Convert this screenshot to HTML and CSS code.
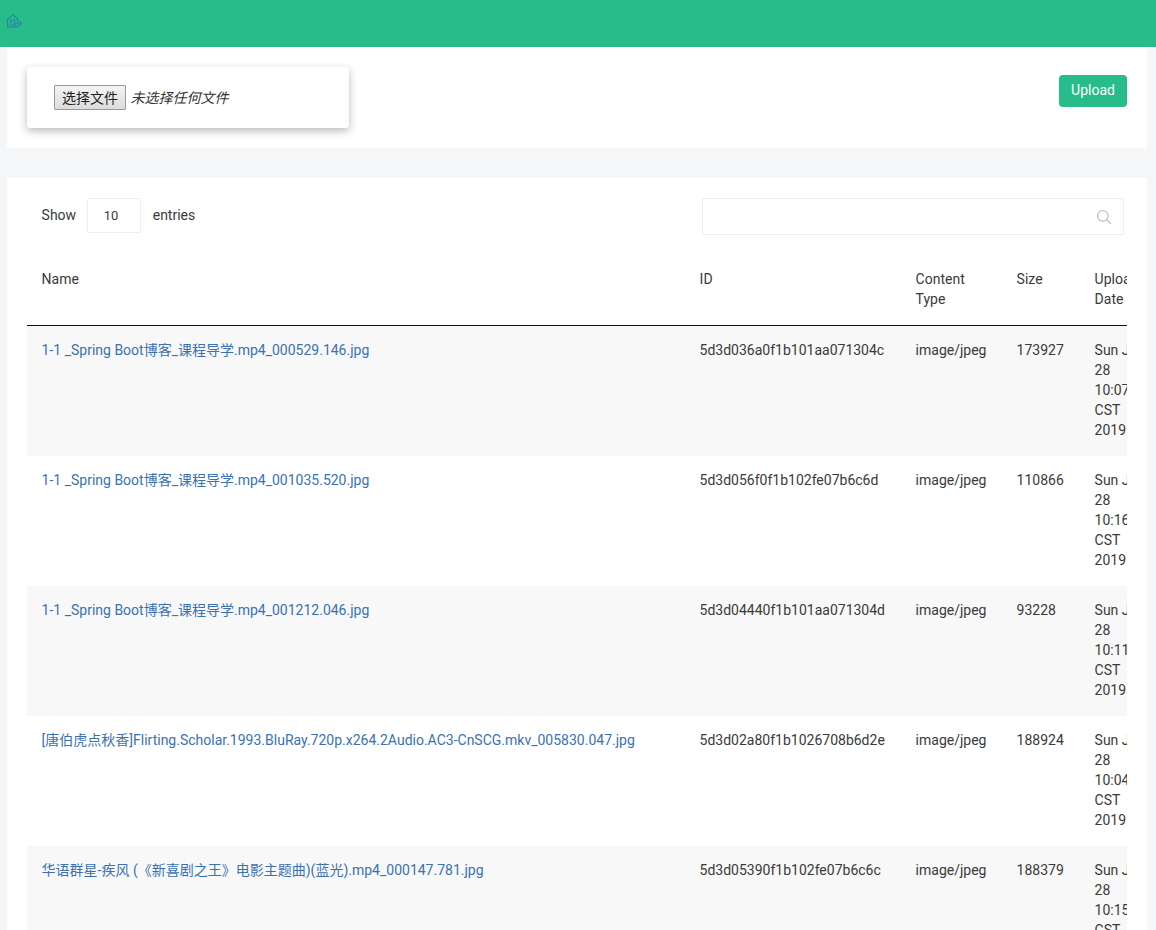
FILE: index.html
```html
<!DOCTYPE html>
<html lang="zh-CN">
<head>
<meta charset="utf-8">
<title>Files</title>
<link rel="stylesheet" href="styles.css">
</head>
<body>
<header class="topbar">
  <svg class="logo" width="16" height="14" viewBox="0 0 16 14" fill="none" stroke="#2a86a6" stroke-width="1.2">
    <path d="M0.5 6.5 L7 0.6 L11.5 4.8 V7.5 M1.5 6 V12.8 H11.5 L15.4 9.4 L14 8 L11 9.8 H7.5"/>
    <path d="M4.8 9.5 V6 H8.6 V8.5 M3.5 11 H10"/>
  </svg>
</header>
<main class="content">
  <section class="card upload-card">
    <div class="file-box">
      <button class="file-btn" type="button">选择文件</button>
      <span class="file-name">未选择任何文件</span>
    </div>
    <button class="upload-btn" type="button">Upload</button>
  </section>
  <section class="card table-card">
    <div class="table-tools">
      <div class="length">
        <span>Show</span>
        <span class="select">10</span>
        <span>entries</span>
      </div>
      <div class="search">
        <svg width="16" height="16" viewBox="0 0 16 16" fill="none" stroke="#b4b8c6" stroke-width="1.1">
          <circle cx="6.8" cy="6.8" r="5.3"/>
          <path d="M10.7 10.7 L15 15" stroke="#c9b9a8"/>
        </svg>
      </div>
    </div>
    <div class="table-wrap">
      <table class="files">
        <colgroup>
          <col class="c-name"><col class="c-id"><col class="c-type"><col class="c-size"><col class="c-date">
        </colgroup>
        <thead>
          <tr><th>Name</th><th>ID</th><th>Content Type</th><th>Size</th><th>Upload Date</th></tr>
        </thead>
        <tbody>
          <tr class="odd"><td><a href="#">1-1 _Spring Boot博客_课程导学.mp4_000529.146.jpg</a></td><td>5d3d036a0f1b101aa071304c</td><td>image/jpeg</td><td>173927</td><td>Sun Jul 28 10:07:06 CST 2019</td></tr>
          <tr><td><a href="#">1-1 _Spring Boot博客_课程导学.mp4_001035.520.jpg</a></td><td>5d3d056f0f1b102fe07b6c6d</td><td>image/jpeg</td><td>110866</td><td>Sun Jul 28 10:16:15 CST 2019</td></tr>
          <tr class="odd"><td><a href="#">1-1 _Spring Boot博客_课程导学.mp4_001212.046.jpg</a></td><td>5d3d04440f1b101aa071304d</td><td>image/jpeg</td><td>93228</td><td>Sun Jul 28 10:11:16 CST 2019</td></tr>
          <tr><td><a href="#">[唐伯虎点秋香]Flirting.Scholar.1993.BluRay.720p.x264.2Audio.AC3-CnSCG.mkv_005830.047.jpg</a></td><td>5d3d02a80f1b1026708b6d2e</td><td>image/jpeg</td><td>188924</td><td>Sun Jul 28 10:04:24 CST 2019</td></tr>
          <tr class="odd"><td><a href="#">华语群星-疾风 (《新喜剧之王》电影主题曲)(蓝光).mp4_000147.781.jpg</a></td><td>5d3d05390f1b102fe07b6c6c</td><td>image/jpeg</td><td>188379</td><td>Sun Jul 28 10:15:21 CST 2019</td></tr>
        </tbody>
      </table>
    </div>
  </section>
</main>
</body>
</html>
```

FILE: styles.css
```css
* { box-sizing: border-box; }
html, body { height: 930px; overflow: hidden; }
body {
  margin: 0;
  background: #f5f6f8;
  color: #3a3a3a;
  font: 14px/20px Roboto, "Noto Sans CJK SC", sans-serif;
  text-spacing-trim: space-all;
}
.topbar {
  height: 47px;
  background: #27bc8a;
  padding: 14px 0 0 6px;
}
.logo { display: block; }
.content { padding: 0 9px 0 7px; }
.card { background: #fff; }
.upload-card {
  display: flex;
  justify-content: space-between;
  align-items: flex-start;
  height: 101px;
  padding: 20px;
}
.file-box {
  display: flex;
  align-items: center;
  gap: 5px;
  width: 322px;
  height: 61px;
  padding: 0 0 0 27px;
  background: #fff;
  border-radius: 3px;
  box-shadow: 0 3px 8px rgba(0, 0, 0, 0.28);
}
.file-btn {
  width: 72px;
  height: 25px;
  padding: 0 0 2px;
  border: 1px solid #999;
  border-radius: 1px;
  background: linear-gradient(#f4f4f4, #dcdcdc);
  color: #222;
  font: 14px/20px "Noto Sans CJK SC", sans-serif;
}
.file-name {
  margin: 0 0 1px -0.5px;
  color: #333;
  font-style: italic;
  font-family: "Noto Sans CJK SC", sans-serif;
}
.upload-btn {
  width: 68px;
  height: 32px;
  margin-top: 8px;
  padding: 0 0 2px;
  border: 0;
  border-radius: 4px;
  background: #27bc8a;
  color: #fff;
  font: 400 14px/20px Roboto, sans-serif;
}
.table-card {
  margin-top: 30px;
  padding: 20px 20px 0;
}
.table-tools {
  display: flex;
  justify-content: space-between;
  align-items: flex-start;
  height: 37px;
  margin-bottom: 19px;
  padding-left: 14.6px;
}
.length {
  display: flex;
  align-items: center;
  height: 33px;
  gap: 10.6px;
}
.select {
  width: 54px;
  height: 35px;
  margin-top: 2px;
  padding: 7px 0 0 16px;
  border: 1px solid #eee;
  border-radius: 2px;
  font-size: 13px;
  margin-right: 1.4px;
}
.search {
  display: flex;
  justify-content: flex-end;
  align-items: center;
  width: 422px;
  height: 37px;
  margin-right: 3px;
  padding-right: 11px;
  border: 1px solid #eee;
  border-radius: 2px;
}
.table-wrap { overflow: hidden; }
.files {
  width: 1140px;
  table-layout: fixed;
  border-collapse: collapse;
}
.c-name { width: 658px; }
.c-id { width: 216px; }
.c-type { width: 101px; }
.c-size { width: 78px; }
.c-date { width: 87px; }
.files th {
  padding: 15px 15px 16px 14.6px;
  border-bottom: 1px solid #111;
  font-weight: 400;
  text-align: left;
  vertical-align: top;
}
.files td {
  height: 130px;
  padding: 14px 15px 16px 14.6px;
  vertical-align: top;
}
.odd { background: #f8f8f8; }
.files a {
  color: #3a72b0;
  text-decoration: none;
}
```
